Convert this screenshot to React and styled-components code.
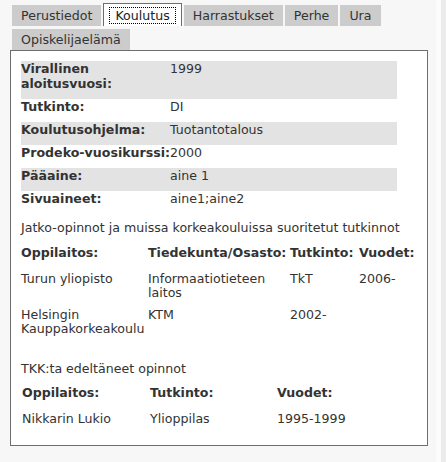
import React from "react";
import styled, { createGlobalStyle } from "styled-components";

const Global = createGlobalStyle`
  html, body { margin: 0; padding: 0; }
  body {
    font-family: "DejaVu Sans", "Liberation Sans", sans-serif;
    font-size: 12.6px;
    color: #333;
  }
`;

const Page = styled.div`
  display: flex;
  height: 462px;
  overflow: hidden;
`;

const Main = styled.div`
  width: 436px;
  flex: none;
  box-sizing: border-box;
  background: #f7f7f7;
  padding: 3px 0 0 10px;
`;

const Gutter = styled.div`
  width: 5px;
  flex: none;
  background: #fcfcfc;
`;

const Track = styled.div`
  flex: 1;
  background: #ebebeb;
`;

const Tabs = styled.ul`
  list-style: none;
  margin: 0;
  padding: 0 0 0 2px;
  display: flex;
  flex-wrap: wrap;
  align-items: flex-end;
  column-gap: 2px;
  row-gap: 3px;
`;

const Tab = styled.li`
  box-sizing: border-box;
  height: ${(p) => (p.$active ? 23 : 21)}px;
  line-height: 21px;
  white-space: nowrap;
  background: ${(p) => (p.$active ? "#fff" : "#ccc")};
  border: ${(p) => (p.$active ? "1px solid #6e6e6e" : "none")};
  border-bottom: none;
  padding: ${(p) => (p.$active ? "1px 5px 0" : "0 9px")};
`;

const Focus = styled.span`
  display: inline-block;
  box-sizing: border-box;
  height: 17px;
  line-height: 15px;
  padding: 0 5px;
  border: 1px dotted #000;
  color: #222;
`;

const Panel = styled.div`
  box-sizing: border-box;
  width: 418px;
  height: 396px;
  background: #fff;
  border: 1px solid #6e6e6e;
  padding: 10px 10px 0;
`;

const InfoTable = styled.table`
  width: 376px;
  table-layout: fixed;
  border-collapse: collapse;
  border-spacing: 0;
`;

const InfoRow = styled.tr`
  background: ${(p) => (p.$shaded ? "#e3e3e3" : "transparent")};
`;

const Label = styled.td`
  width: 149px;
  padding: 0 0 8px;
  line-height: 15px;
  font-weight: bold;
  vertical-align: top;
`;

const Word = styled.span`
  white-space: nowrap;
`;

const Value = styled.td`
  padding: 0 0 8px;
  line-height: 15px;
  vertical-align: top;
`;

const Heading = styled.div`
  line-height: 14px;
  margin: ${(p) => p.$margin};
`;

const ListTable = styled.table`
  table-layout: fixed;
  border-collapse: collapse;
  border-spacing: 0;
  width: ${(p) => p.$width}px;
  margin-bottom: 22px;
`;

const Th = styled.th`
  text-align: left;
  font-weight: bold;
  line-height: 14px;
  padding: 4px 0 8px ${(p) => p.$inset}px;
  vertical-align: top;
  white-space: nowrap;
`;

const Td = styled.td`
  line-height: 14px;
  padding: 4px 2px 4px ${(p) => p.$inset}px;
  vertical-align: top;
`;

const tabs = ["Perustiedot", "Koulutus", "Harrastukset", "Perhe", "Ura", "Opiskelijaelämä"];

const info = [
  ["Virallinen aloitusvuosi:", "1999"],
  ["Tutkinto:", "DI"],
  ["Koulutusohjelma:", "Tuotantotalous"],
  ["Prodeko-vuosikurssi:", "2000"],
  ["Pääaine:", "aine 1"],
  ["Sivuaineet:", "aine1;aine2"],
];

const further = {
  inset: 0,
  cols: [127, 142, 69, 60],
  head: ["Oppilaitos:", "Tiedekunta/Osasto:", "Tutkinto:", "Vuodet:"],
  rows: [
    ["Turun yliopisto", "Informaatiotieteen laitos", "TkT", "2006-"],
    ["Helsingin Kauppakorkeakoulu", "KTM", "2002-", ""],
  ],
};

const earlier = {
  inset: 1,
  cols: [128, 127, 121],
  head: ["Oppilaitos:", "Tutkinto:", "Vuodet:"],
  rows: [["Nikkarin Lukio", "Ylioppilas", "1995-1999"]],
};

function Words({ text }) {
  const parts = text.split(" ");
  return parts.map((w, i) => (
    <React.Fragment key={i}>
      <Word>{w}</Word>
      {i < parts.length - 1 ? " " : null}
    </React.Fragment>
  ));
}

function List({ data }) {
  const width = data.cols.reduce((a, b) => a + b, 0);
  return (
    <ListTable $width={width}>
      <colgroup>
        {data.cols.map((w, i) => (
          <col key={i} style={{ width: w }} />
        ))}
      </colgroup>
      <thead>
        <tr>
          {data.head.map((h) => (
            <Th key={h} $inset={data.inset}>
              {h}
            </Th>
          ))}
        </tr>
      </thead>
      <tbody>
        {data.rows.map((r, i) => (
          <tr key={i}>
            {r.map((c, j) => (
              <Td key={j} $inset={data.inset}>
                {c}
              </Td>
            ))}
          </tr>
        ))}
      </tbody>
    </ListTable>
  );
}

export default function App() {
  return (
    <>
      <Global />
      <Page>
        <Main>
          <Tabs>
            {tabs.map((t) =>
              t === "Koulutus" ? (
                <Tab key={t} $active>
                  <Focus>{t}</Focus>
                </Tab>
              ) : (
                <Tab key={t}>{t}</Tab>
              )
            )}
          </Tabs>
          <Panel>
            <InfoTable>
              <tbody>
                {info.map(([l, v], i) => (
                  <InfoRow key={l} $shaded={i % 2 === 0}>
                    <Label>
                      <Words text={l} />
                    </Label>
                    <Value>{v}</Value>
                  </InfoRow>
                ))}
              </tbody>
            </InfoTable>
            <Heading $margin="7px 0 7px">
              Jatko-opinnot ja muissa korkeakouluissa suoritetut tutkinnot
            </Heading>
            <List data={further} />
            <Heading $margin="0 0 6px">TKK:ta edeltäneet opinnot</Heading>
            <List data={earlier} />
          </Panel>
        </Main>
        <Gutter />
        <Track />
      </Page>
    </>
  );
}
